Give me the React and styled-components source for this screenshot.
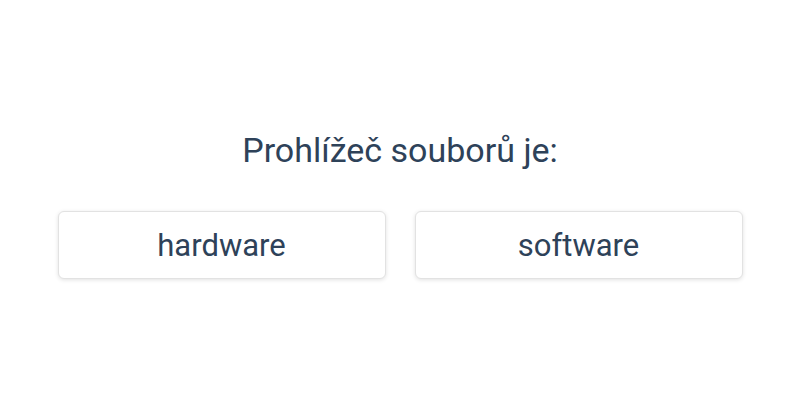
import React from "react";
import styled, { createGlobalStyle } from "styled-components";

const GlobalStyle = createGlobalStyle`
  html, body {
    margin: 0;
    padding: 0;
    background: #ffffff;
  }
  body {
    font-family: Roboto, "Noto Sans", sans-serif;
  }
`;

const Page = styled.div`
  width: 800px;
  height: 400px;
  display: flex;
  flex-direction: column;
  align-items: center;
  padding-top: 127px;
  box-sizing: border-box;
`;

const Question = styled.h2`
  margin: 0;
  font-size: 34px;
  font-weight: 400;
  color: #2e4259;
  line-height: 46px;
`;

const Options = styled.div`
  margin-top: 38px;
  display: grid;
  grid-template-columns: 328px 328px;
  gap: 29px;
`;

const Option = styled.button`
  height: 68px;
  background: #ffffff;
  border: 1px solid #e2e2e2;
  border-radius: 6px;
  box-shadow: 0 1px 4px rgba(0, 0, 0, 0.12);
  font-family: Roboto, "Noto Sans", sans-serif;
  font-size: 31px;
  color: #2e4259;
  cursor: pointer;
`;

const App = () => {
  return (
    <Page>
      <GlobalStyle />
      <Question>Prohlížeč souborů je:</Question>
      <Options>
        <Option>hardware</Option>
        <Option>software</Option>
      </Options>
    </Page>
  );
};

export default App;
